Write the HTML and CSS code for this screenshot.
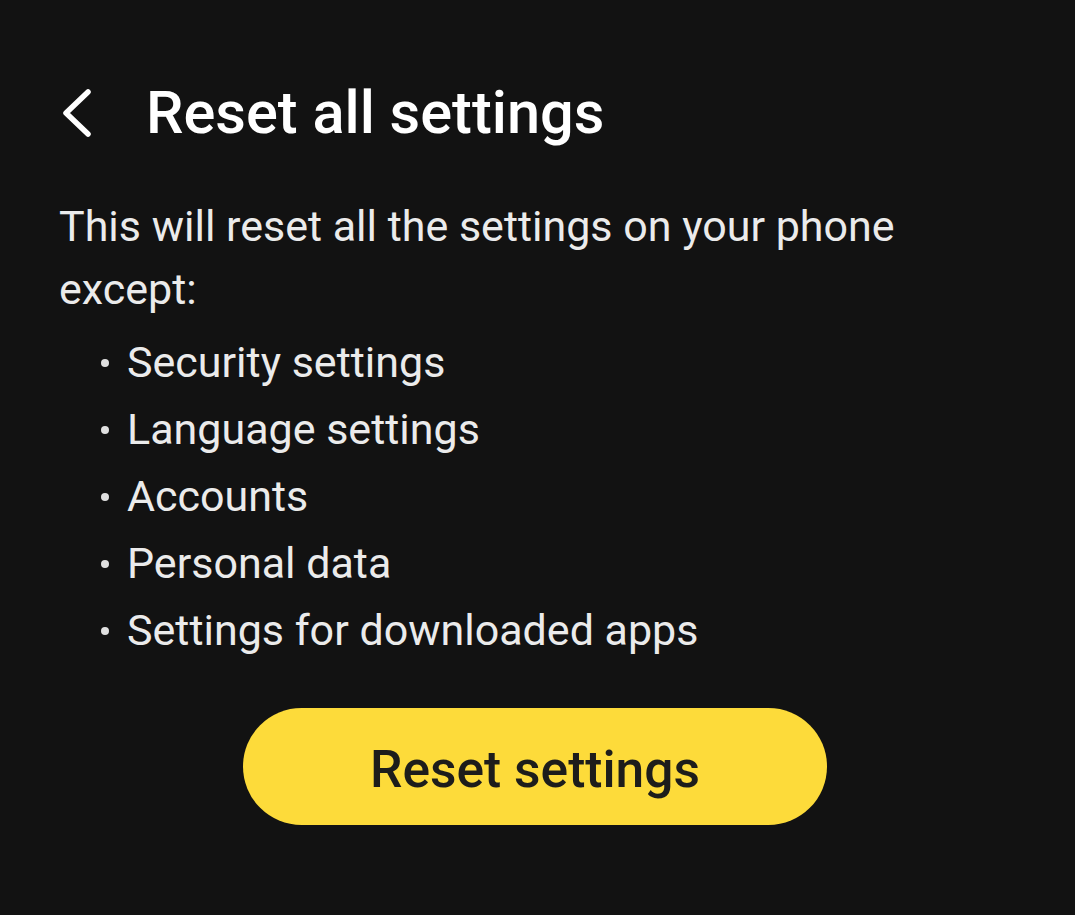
FILE: index.html
```html
<!DOCTYPE html>
<html>
<head>
<meta charset="utf-8">
<link rel="stylesheet" href="styles.css">
</head>
<body>
<div class="screen">
  <header class="header">
    <span class="back">
      <svg width="32" height="50" viewBox="0 0 32 50"><path d="M28 4 L6 25 L28 46" fill="none" stroke="#ffffff" stroke-width="5.5" stroke-linecap="round" stroke-linejoin="round"/></svg>
    </span>
    <h1 class="title">Reset all settings</h1>
  </header>
  <p class="desc">This will reset all the settings on your phone except:</p>
  <ul class="list">
    <li>Security settings</li>
    <li>Language settings</li>
    <li>Accounts</li>
    <li>Personal data</li>
    <li>Settings for downloaded apps</li>
  </ul>
  <div class="actions">
    <button class="btn">Reset settings</button>
  </div>
</div>
</body>
</html>
```
FILE: styles.css
```css
html, body {
  margin: 0;
  padding: 0;
  background: #121212;
}
body {
  font-family: Roboto, "Noto Sans", sans-serif;
  width: 1075px;
  height: 915px;
  overflow: hidden;
}
.screen {
  padding: 80px 0 0 59px;
}
.header {
  display: flex;
  align-items: center;
  height: 66px;
}
.back {
  display: flex;
  width: 87px;
  padding-left: 1px;
  box-sizing: border-box;
}
.title {
  margin: 0;
  font-size: 59.5px;
  font-weight: 500;
  color: #ffffff;
  line-height: 66px;
}
.desc {
  margin: 49px 0 0 0;
  width: 880px;
  font-size: 43px;
  line-height: 63px;
  color: #ebebeb;
}
.list {
  list-style: none;
  margin: 8px 0 0 0;
  padding: 0 0 0 42px;
}
.list li {
  font-size: 43px;
  line-height: 67px;
  color: #ebebeb;
  display: flex;
  align-items: center;
}
.list li::before {
  content: "";
  width: 8px;
  height: 8px;
  border-radius: 50%;
  background: #e0e0e0;
  margin-right: 18px;
  flex: none;
}
.actions {
  display: flex;
  padding-left: 184px;
  margin-top: 44px;
}
.btn {
  width: 584px;
  height: 117px;
  border: none;
  border-radius: 59px;
  background: #fddb3a;
  color: #1d1d1b;
  font-family: Roboto, sans-serif;
  font-size: 51.5px;
  font-weight: 500;
  padding: 6px 0 0 0;
}
```
